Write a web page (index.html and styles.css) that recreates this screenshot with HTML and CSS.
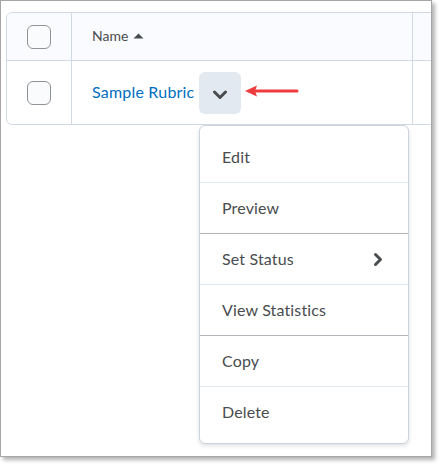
FILE: index.html
```html
<!DOCTYPE html>
<html>
<head>
<meta charset="utf-8">
<link rel="stylesheet" href="styles.css">
</head>
<body>
<div class="frame">
  <div class="table">
    <div class="cell head check-col"><span class="checkbox"></span></div>
    <div class="cell head name-col"><span class="head-label">Name</span>
      <svg class="sort" width="11" height="6" viewBox="0 0 11 6"><path d="M0.5 5.5 L5.5 0.5 L10.5 5.5 Z" fill="#494c4e"/></svg>
    </div>
    <div class="cell head extra-col"></div>
    <div class="cell body check-col"><span class="checkbox"></span></div>
    <div class="cell body name-col">
      <a class="link">Sample Rubric</a>
      <span class="ctx-btn">
        <svg width="16" height="10" viewBox="0 0 16 10"><polyline points="2.5,2 8,7.5 13.5,2" fill="none" stroke="#494c4e" stroke-width="3" stroke-linecap="round" stroke-linejoin="round"/></svg>
      </span>
    </div>
    <div class="cell body extra-col"></div>
  </div>

  <svg class="annot" width="56" height="14" viewBox="0 0 56 14">
    <line x1="10" y1="7" x2="53" y2="7" stroke="#ee3b3e" stroke-width="3" stroke-linecap="round"/>
    <path d="M1 7 L13 1.5 L11 7 L13 12.5 Z" fill="#ee3b3e"/>
  </svg>

  <div class="menu">
    <div class="item">Edit</div>
    <div class="item group-end">Preview</div>
    <div class="item has-sub">Set Status
      <svg width="10" height="15" viewBox="0 0 10 15"><polyline points="2.5,2.5 7.5,7.5 2.5,12.5" fill="none" stroke="#494c4e" stroke-width="3" stroke-linecap="round" stroke-linejoin="round"/></svg>
    </div>
    <div class="item group-end">View Statistics</div>
    <div class="item">Copy</div>
    <div class="item last">Delete</div>
  </div>
</div>
</body>
</html>
```

FILE: styles.css
```css
html, body {
  margin: 0;
  padding: 0;
  background: #ffffff;
}
body {
  width: 442px;
  height: 468px;
  overflow: hidden;
  font-family: Lato, "Open Sans", sans-serif;
  color: #494c4e;
}
.frame {
  position: relative;
  box-sizing: border-box;
  width: 432px;
  height: 457px;
  border: 1px solid #a6a6a6;
  background: #ffffff;
  box-shadow: 3px 3px 4px rgba(0, 0, 0, 0.3);
  overflow: hidden;
  padding-top: 11px;
  padding-left: 5px;
}
.table {
  display: grid;
  grid-template-columns: 65px 341px 60px;
  grid-template-rows: 48px 63px;
  width: 466px;
  border: 1px solid #d3d9e3;
  border-radius: 6px 0 0 6px;
  overflow: hidden;
}
.cell {
  display: flex;
  align-items: center;
  box-sizing: border-box;
}
.cell.head {
  background: #f9fbff;
  border-bottom: 1px solid #d3d9e3;
}
.check-col {
  justify-content: center;
  border-right: 1px solid #d3d9e3;
}
.name-col {
  padding-left: 20px;
  border-right: 1px solid #d3d9e3;
}
.checkbox {
  display: block;
  box-sizing: border-box;
  width: 24px;
  height: 24px;
  border: 1px solid #8f9296;
  border-radius: 6px;
  background: #fafbfc;
}
.cell.body .checkbox {
  margin-top: 1px;
}
.head-label {
  font-size: 14px;
  color: #494c4e;
  margin-top: -2px;
}
.sort {
  margin-left: 5px;
  margin-top: -2px;
}
.link {
  font-size: 16px;
  letter-spacing: 0.2px;
  color: #006fbf;
  margin-top: -3px;
}
.ctx-btn {
  display: flex;
  align-items: center;
  justify-content: center;
  width: 42px;
  height: 42px;
  margin-left: 5px;
  margin-top: 1px;
  border-radius: 6px;
  background: #e3e9f1;
}
.ctx-btn svg {
  margin-top: 3px;
}
.annot {
  position: absolute;
  left: 243px;
  top: 83px;
}
.menu {
  position: absolute;
  left: 198px;
  top: 124px;
  box-sizing: border-box;
  width: 210px;
  padding: 6px 0;
  border: 1px solid #cdd3dc;
  border-radius: 6px;
  background: #ffffff;
  box-shadow: 0 2px 4px rgba(0, 0, 0, 0.12);
}
.item {
  display: flex;
  align-items: center;
  justify-content: space-between;
  box-sizing: border-box;
  height: 51px;
  padding: 0 25px 2px 22px;
  font-size: 16px;
  letter-spacing: 0.15px;
  color: #494c4e;
  border-bottom: 1px solid #e3e9f1;
}
.item.group-end {
  border-bottom-color: #b1b5ba;
}
.item.last {
  border-bottom: none;
  height: 50px;
}
.has-sub svg {
  margin-top: 3px;
}
```
